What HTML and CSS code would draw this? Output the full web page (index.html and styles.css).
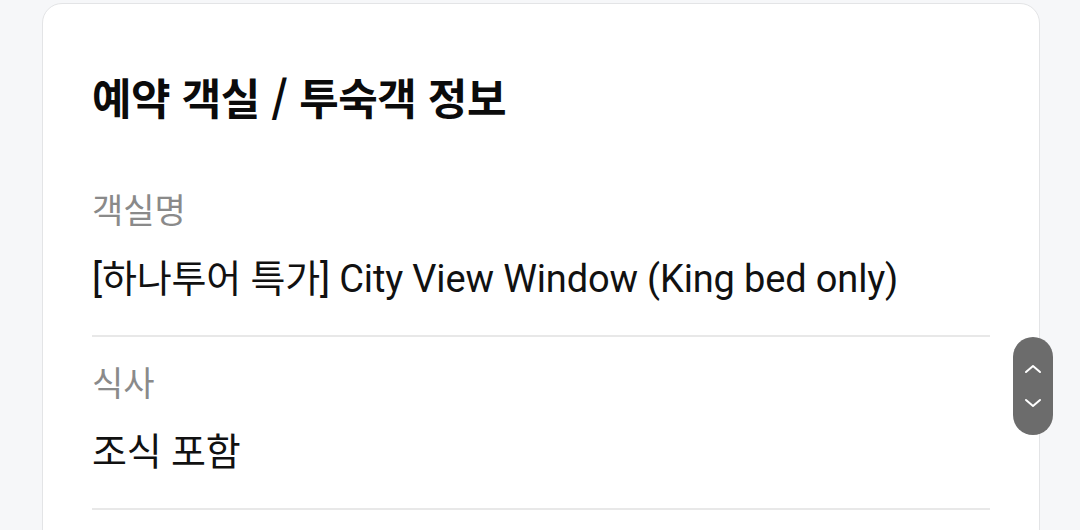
FILE: index.html
```html
<!DOCTYPE html>
<html lang="ko">
<head>
<meta charset="utf-8">
<link rel="stylesheet" href="styles.css">
</head>
<body>
<div class="page">
  <section class="card">
    <h2 class="title">예약 객실 / 투숙객 정보</h2>
    <div class="row">
      <div class="label">객실명</div>
      <div class="value">[하나투어 특가] City View Window (King bed only)</div>
    </div>
    <div class="row">
      <div class="label">식사</div>
      <div class="value">조식 포함</div>
    </div>
  </section>
  <div class="scroller">
    <svg width="20" height="14" viewBox="0 0 20 14" class="chev"><path d="M3 10 L10 4 L17 10" fill="none" stroke="#fff" stroke-width="2" stroke-linecap="round" stroke-linejoin="round"/></svg>
    <svg width="20" height="14" viewBox="0 0 20 14" class="chev"><path d="M3 4 L10 10 L17 4" fill="none" stroke="#fff" stroke-width="2" stroke-linecap="round" stroke-linejoin="round"/></svg>
  </div>
</div>
</body>
</html>
```
FILE: styles.css
```css
html, body {
  margin: 0;
  padding: 0;
  background: #f6f7f9;
  overflow: hidden;
}
body {
  font-family: Roboto, "Noto Sans CJK KR", "Noto Sans", sans-serif;
  color: #111;
}
.page {
  position: relative;
  width: 1080px;
  height: 530px;
  padding: 3px 0 0 42px;
  box-sizing: border-box;
}
.card {
  width: 998px;
  height: 600px;
  background: #fff;
  border: 1px solid #e3e4e6;
  border-radius: 20px;
  box-sizing: border-box;
  padding: 64px 49px 0 49px;
}
.title {
  margin: 0;
  font-family: "Noto Sans CJK KR", sans-serif;
  font-size: 43px;
  line-height: 56px;
  font-weight: 700;
  color: #0b0b0b;
  letter-spacing: -0.5px;
}
.row {
  padding: 25px 0 33px;
  border-bottom: 2px solid #e8e8e8;
}
.card .row:first-of-type {
  margin-top: 40px;
}
.label {
  font-size: 34px;
  line-height: 44px;
  color: #8a8a8a;
  font-weight: 400;
}
.value {
  margin-top: 23px;
  font-size: 38px;
  line-height: 46px;
  color: #111;
  letter-spacing: -0.15px;
}
.scroller {
  position: absolute;
  left: 1013px;
  top: 337px;
  width: 40px;
  height: 98px;
  border-radius: 20px;
  background: #6c6c6c;
  display: flex;
  flex-direction: column;
  align-items: center;
  justify-content: center;
  gap: 20px;
}
.chev {
  display: block;
}
```
